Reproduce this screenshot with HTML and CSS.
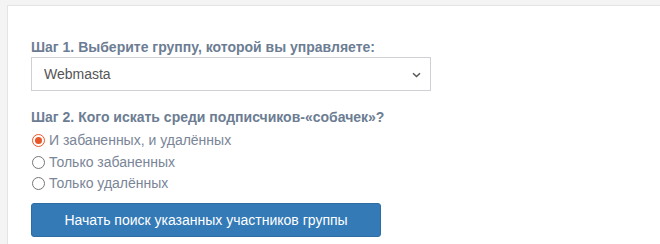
FILE: index.html
```html
<!DOCTYPE html>
<html lang="ru">
<head>
<meta charset="utf-8">
<link rel="stylesheet" href="styles.css">
</head>
<body>
<div class="card">
  <label class="step" for="grp">Шаг 1. Выберите группу, которой вы управляете:</label>
  <div class="select">
    <span class="select-value">Webmasta</span>
    <svg class="chev" width="9" height="6" viewBox="0 0 9 6"><path d="M1 1.2 L4.5 4.6 L8 1.2" fill="none" stroke="#555" stroke-width="1.4"/></svg>
  </div>
  <div class="step step2">Шаг 2. Кого искать среди подписчиков-«собачек»?</div>
  <div class="radios">
    <div class="radio"><span class="dot checked"></span>И забаненных, и удалённых</div>
    <div class="radio"><span class="dot"></span>Только забаненных</div>
    <div class="radio"><span class="dot"></span>Только удалённых</div>
  </div>
  <button class="btn">Начать поиск указанных участников группы</button>
</div>
</body>
</html>
```
FILE: styles.css
```css
html, body { margin: 0; padding: 0; }
body {
  background: #f4f4f4;
  font-family: "Liberation Sans", Arial, sans-serif;
  font-size: 14px;
  padding: 5px 0 0 7px;
  height: 244px;
  box-sizing: border-box;
  overflow: hidden;
}
.card {
  background: #fff;
  border-top: 1px solid #e4e4e4;
  border-left: 1px solid #e4e4e4;
  padding: 32px 0 0 23px;
  height: 239px;
  box-sizing: border-box;
}
.step {
  display: block;
  font-weight: bold;
  color: #6c7d93;
  line-height: 19px;
}
.select {
  width: 377px;
  height: 32px;
  border: 1px solid #cfcfd4;
  display: flex;
  align-items: center;
  justify-content: space-between;
  padding: 0 9px 0 12px;
  box-sizing: content-box;
}
.select-value { color: #555; font-size: 14px; }
.chev { margin-top: 1px; }
.step2 { margin-top: 17px; }
.radios { margin-top: 3px; }
.radio {
  display: flex;
  align-items: center;
  line-height: 21.5px;
  color: #7a8597;
  font-size: 14px;
}
.dot {
  width: 11px;
  height: 11px;
  border: 1px solid #767676;
  border-radius: 50%;
  margin: 0 4px 0 1px;
  box-sizing: content-box;
  position: relative;
}
.dot.checked {
  border-color: #e8572a;
}
.dot.checked::after {
  content: "";
  position: absolute;
  left: 2px; top: 2px;
  width: 7px; height: 7px;
  border-radius: 50%;
  background: #e8572a;
}
.btn {
  display: block;
  margin-top: 8px;
  width: 350px;
  height: 34px;
  background: #337ab7;
  border: 1px solid #2e6da4;
  border-radius: 3px;
  color: #fff;
  font-family: "Liberation Sans", Arial, sans-serif;
  font-size: 14px;
  padding: 0;
}
```
